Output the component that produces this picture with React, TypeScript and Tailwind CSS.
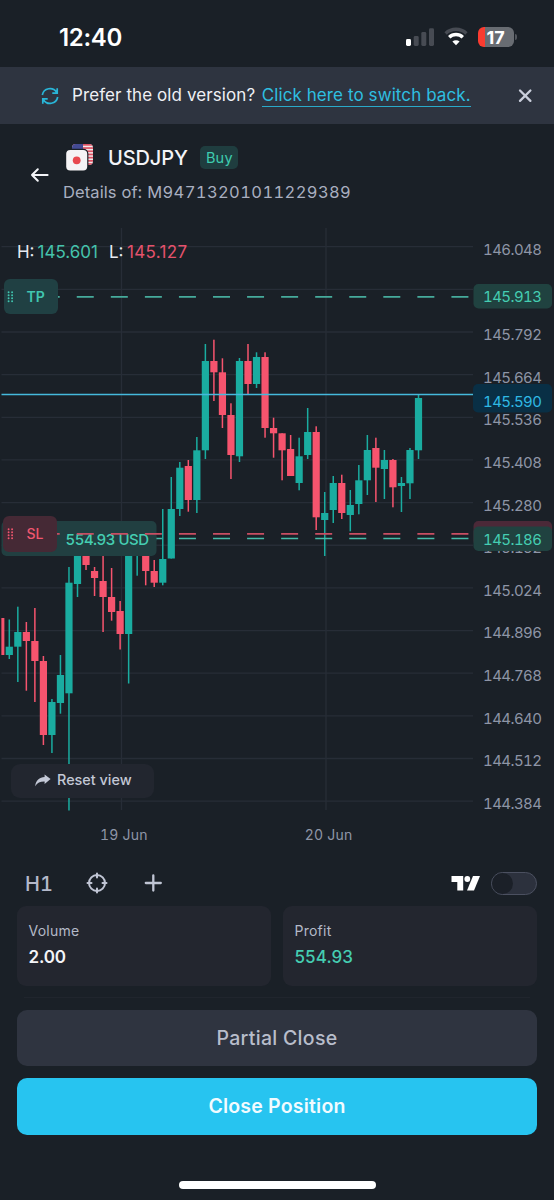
// ─── Chart data ───────────────────────────────────────────────────────────────

const FIRST_X = 9.3
const STEP = 8.525
const TOP = 228

// [isUp, high, open/close top, open/close bottom, low] in canvas units
type Candle = [number, number, number, number, number]

const candles: Candle[] = [
  [0, 618, 618, 655, 655],
  [1, 619.5, 646.7, 655, 659],
  [1, 606.7, 632, 646.7, 682],
  [0, 622, 632, 641, 690.7],
  [0, 608, 641, 661, 702],
  [0, 656, 661, 735, 745],
  [1, 699, 702, 735, 753],
  [1, 655, 675, 703, 713.7],
  [1, 567, 582.7, 693.3, 810.5],
  [1, 545, 550, 584, 597],
  [0, 545, 550, 565, 570],
  [0, 567, 571, 578, 596],
  [0, 550, 581, 597, 632],
  [0, 568, 597, 612, 620.7],
  [0, 601, 611, 634, 649.5],
  [1, 545, 550, 634, 683.5],
  [1, 545, 550, 555, 575.7],
  [0, 545, 550, 571, 585.3],
  [0, 560, 571, 582.7, 587],
  [1, 509, 559, 582.7, 585.3],
  [1, 477, 509, 558.5, 558.5],
  [1, 462, 467.7, 509, 516],
  [0, 460, 466, 500, 511.7],
  [1, 437, 450.3, 500, 513],
  [1, 344, 361, 450.3, 459],
  [0, 339.7, 361, 372.3, 401],
  [0, 358.3, 372.3, 415, 428],
  [0, 403.3, 415, 455, 479],
  [1, 358, 361, 456.3, 462],
  [0, 344, 361, 384, 394],
  [1, 352.3, 357, 384, 388],
  [0, 352.3, 357, 428, 437.7],
  [0, 417.7, 428, 433.3, 457.7],
  [0, 433.3, 433.3, 450.3, 480.3],
  [0, 435, 449, 476, 476],
  [1, 437.7, 456.3, 483, 490.3],
  [1, 408, 432, 455, 459],
  [0, 426.3, 432, 517.3, 530],
  [1, 492, 513, 520, 556],
  [1, 476, 483, 510, 523],
  [0, 474.7, 483, 513, 519],
  [1, 490, 505, 515, 531.3],
  [1, 465, 480.3, 504, 514.3],
  [1, 435, 450, 480.3, 495],
  [0, 437.7, 448, 467.7, 502],
  [1, 450, 460, 469, 499],
  [0, 459, 460, 487.3, 507.3],
  [1, 477, 483, 486, 512],
  [1, 448, 450, 483.3, 499],
  [1, 395, 398, 450.3, 459],
]

const prices = [
  '146.048', '', '145.792', '145.664', '145.536', '145.408', '145.280',
  '145.152', '145.024', '144.896', '144.768', '144.640', '144.512', '144.384',
]

// ─── Status bar ───────────────────────────────────────────────────────────────

function StatusBar() {
  return (
    <header className="flex h-[67px] items-center justify-between pt-[7px] pr-[37px] pl-[59px]">
      <span className="pt-px text-[24px] font-semibold tracking-[-0.3px] text-white">12:40</span>
      <div className="flex items-center">
        <svg width="30" height="20" viewBox="0 0 30 20">
          <rect x="1" y="12" width="5" height="7" rx="1.4" fill="#fff" />
          <rect x="8.7" y="9" width="5" height="10" rx="1.4" fill="#474b53" />
          <rect x="16.3" y="5" width="5" height="14" rx="1.4" fill="#474b53" />
          <rect x="24" y="1.3" width="5" height="17.7" rx="1.4" fill="#474b53" />
        </svg>
        <svg className="ml-[9px]" width="24" height="20" viewBox="0 0 24 20" fill="none">
          <path d="M1.6 6.4a15 15 0 0 1 20.8 0" stroke="#474b53" strokeWidth="3.4" />
          <path d="M5.2 10.3a9.8 9.8 0 0 1 13.6 0" stroke="#fff" strokeWidth="3.4" />
          <path d="M12 18.2 8.4 14.6a5.2 5.2 0 0 1 7.2 0Z" fill="#fff" />
        </svg>
        <div className="ml-[10px] flex h-[20px] w-[36px] items-center justify-center overflow-hidden rounded-[6px] bg-[linear-gradient(90deg,#fb3b30_19%,#686c72_19%)] pr-[1px] text-[18px] font-bold text-white">
          17
        </div>
        <div className="ml-[1px] h-[6px] w-[2px] rounded-r-full bg-[#52565d]" />
      </div>
    </header>
  )
}

// ─── Version banner ───────────────────────────────────────────────────────────

function Banner() {
  return (
    <div className="flex h-[57px] items-center bg-[#2e3440] pr-[20px] pl-[41px]">
      <svg width="18" height="18" viewBox="0 0 18 18" fill="none" stroke="#29b6d8" strokeWidth="1.7">
        <path d="M1.3 8A7.8 7.8 0 0 1 15.6 5.3M16.2 1.2v4.9h-4.9" />
        <path d="M16.7 10A7.8 7.8 0 0 1 2.4 12.7M1.8 16.8v-4.9h4.9" />
      </svg>
      <p className="ml-[13px] flex items-baseline text-[17px] leading-[22px] tracking-[0.09px] whitespace-pre text-[#eef0f5]">
        Prefer the old version?
        <a className="ml-[6.5px] border-b-[1.5px] border-[#2aa9c9] text-[#2ebfe0]">
          Click here to switch back.
        </a>
      </p>
      <svg className="ml-auto" width="18" height="18" viewBox="0 0 18 18" stroke="#c9cedb" strokeWidth="2.3" strokeLinecap="round">
        <path d="M4 3.5l10.4 10.4M14.4 3.5L4 13.9" />
      </svg>
    </div>
  )
}

// ─── Instrument header ────────────────────────────────────────────────────────

function PairFlags() {
  return (
    <svg width="28" height="28" viewBox="0 0 28 28">
      <defs>
        <clipPath id="us">
          <rect x="6" y="0" width="21" height="21" rx="4" />
        </clipPath>
      </defs>
      <g clipPath="url(#us)">
        <rect x="6" width="21" height="22" fill="#f3e7ea" />
        {[0, 3.2, 6.4, 9.6, 12.8, 16, 19.2].map((y) => (
          <rect key={y} x="6" y={y} width="21" height="1.7" fill="#dc5263" />
        ))}
        <rect x="6" width="11" height="10" fill="#434a93" />
      </g>
      <rect x="-0.8" y="4.8" width="23.2" height="23" rx="5" fill="#1a2027" />
      <rect x="0.2" y="6" width="21" height="20.6" rx="4" fill="#f5f3f5" />
      <circle cx="10.7" cy="16.3" r="3.9" fill="#e8484f" />
    </svg>
  )
}

function InstrumentHeader() {
  return (
    <section className="flex h-[104px] pl-[30px]">
      <svg className="mt-[42px]" width="20" height="18" viewBox="0 0 20 18" fill="none" stroke="#f3f4f8" strokeWidth="2" strokeLinecap="round" strokeLinejoin="round">
        <path d="M17.6 9H2M7.8 3.2 2 9l5.8 5.8" />
      </svg>
      <div className="ml-[13px] pt-[19px]">
        <div className="flex h-[29px] items-center pl-[3px]">
          <PairFlags />
          <h1 className="ml-[14px] text-[20px] font-medium tracking-[-0.1px] text-[#f3f4f8]">USDJPY</h1>
          <span className="ml-[12.5px] flex h-[23px] w-[38px] items-center justify-center rounded-[5px] bg-[#1f3d3f] text-[14.5px] tracking-[0.2px] text-[#3ecdb0]">
            Buy
          </span>
        </div>
        <p className="mt-[8px] text-[16.5px] leading-[24px] tracking-[0.1px] whitespace-nowrap text-[#a9afc0]">
          Details of: <span className="tracking-[0.4px] tabular-nums">M94713201011229389</span>
        </p>
      </div>
    </section>
  )
}

// ─── Chart ────────────────────────────────────────────────────────────────────

function Candles() {
  return (
    <g clipPath="url(#plot)">
      {candles.map(([up, high, top, bottom, low], i) => {
        const x = FIRST_X + STEP * (i - 1)
        const fill = up ? '#1aaca0' : '#f6546e'
        return (
          <g key={i} fill={fill}>
            <rect x={x - 0.75} y={high} width="1.5" height={low - high} />
            <rect x={x - 3.6} y={top} width="7.2" height={bottom - top} />
          </g>
        )
      })}
    </g>
  )
}

type DashProps = {
  y: number
  color: string
  height: number
  from?: number
}

function DashLine({ y, color, height, from = 42.7 }: DashProps) {
  return (
    <line x1={from} x2="473" y1={y} y2={y} stroke={color} strokeWidth={height} strokeDasharray="17 17.06" />
  )
}

function Grip({ color }: { color: string }) {
  return (
    <svg width="7" height="12" viewBox="0 0 7 12" fill={color}>
      {[1.2, 4.2, 7.2, 10.2].map((y) => (
        <g key={y}>
          <circle cx="1.6" cy={y} r="0.95" />
          <circle cx="5.1" cy={y} r="0.95" />
        </g>
      ))}
    </svg>
  )
}

function Chart() {
  return (
    <section className="relative h-[628px]">
      <svg width="554" height="628" viewBox={`0 ${TOP} 554 628`} className="block tabular-nums">
        <defs>
          <clipPath id="plot">
            <rect x="1.5" y={TOP} width="472" height="583" />
          </clipPath>
        </defs>
        <g stroke="#272d37" strokeWidth="1.3">
          {prices.map((_, i) => (
            <line key={i} x1="1.5" x2="473" y1={246.7 + 42.65 * i} y2={246.7 + 42.65 * i} />
          ))}
          <line x1="121.5" x2="121.5" y1="228" y2="810" />
          <line x1="326" x2="326" y1="228" y2="810" />
        </g>
        <Candles />
        <line x1="1.5" x2="473" y1="394.4" y2="394.4" stroke="#45b9dc" strokeWidth="1.5" />
        <DashLine y={296.9} color="#46ab9c" height={1.9} />

        {/* open position pill with both order lines running over it */}
        <rect x="1.5" y="521" width="155" height="35" rx="5" fill="#213f41" />
        <DashLine y={538.4} color="#46bba9" height={1.5} from={144.9} />
        <rect x="144" y="536" width="12.5" height="5" fill="#213f41" />
        <text x="65.5" y="544.5" fontSize="15" fontWeight="500" fill="#45ceb2" textLength="83.5">554.93 USD</text>
        <DashLine y={533.8} color="#c94e63" height={1.7} />

        <g fontSize="15" fill="#8e95a6">
          {prices.map((price, i) => (
            <text key={i} x="483" y={254.6 + 42.65 * i} textLength={price ? 59 : undefined}>{price}</text>
          ))}
          <text x="100" y="840" fontSize="14" textLength="47.5">19 Jun</text>
          <text x="304.8" y="840" fontSize="14" textLength="47.5">20 Jun</text>
        </g>

        <rect x="473.5" y="284" width="78.5" height="24.5" rx="5" fill="#204240" />
        <rect x="473" y="384" width="79" height="28.5" rx="5" fill="#092f45" />
        <rect x="473.5" y="521" width="78.5" height="25" rx="5" fill="#4b2938" />
        <rect x="473.5" y="526.5" width="78.5" height="24.5" rx="5" fill="#204240" />
        <g fontSize="15">
          <text x="483" y="301.9" fill="#45ceb2" textLength="59">145.913</text>
          <text x="483" y="406.8" fill="#2fb9e4" textLength="59">145.590</text>
          <text x="483" y="544.6" fill="#45ceb2" textLength="59">145.186</text>
        </g>

        <g fontSize="17" className="[font-variant-numeric:normal]">
          <text x="17" y="257.5" fill="#e8ebf2" textLength="17.5">H:</text>
          <text x="37.5" y="257.5" fill="#45c3ac" textLength="60.5">145.601</text>
          <text x="109" y="257.5" fill="#e8ebf2">L:</text>
          <text x="127" y="257.5" fill="#e4526c" textLength="60">145.127</text>
        </g>
      </svg>

      <div className="absolute top-[51px] left-[4px] flex h-[35px] w-[54px] items-center rounded-[6px] bg-[#204043] pl-[3px] text-[14px] font-semibold text-[#41c6b0]">
        <Grip color="#41c6b0" />
        <span className="ml-[12.5px]">TP</span>
      </div>
      <div className="absolute top-[287.5px] left-[3px] flex h-[36px] w-[54px] items-center rounded-[6px] bg-[#452935] pl-[4px] text-[14px] font-medium text-[#f0566f]">
        <Grip color="#f0566f" />
        <span className="ml-[12.5px]">SL</span>
      </div>
      <button className="absolute top-[536px] left-[11px] flex h-[34px] w-[143px] items-center rounded-[9px] bg-[#22262f] pb-[2px] pl-[24px] text-[14.4px] font-medium text-[#c3c8d6]">
        <svg width="16" height="13" viewBox="0 0 16 13" fill="#c3c8d6">
          <path d="M15.6 5.1 9.6 0.4v2.7C4.5 3.3.8 6.3.2 12.3c2.2-3.6 5-4.9 9.4-4.8v2.6z" />
        </svg>
        <span className="ml-[6px]">Reset view</span>
      </button>
    </section>
  )
}

// ─── Toolbar ──────────────────────────────────────────────────────────────────

function Toolbar() {
  return (
    <section className="flex h-[50px] items-center pt-[4px] pr-[17px] pl-[25px]">
      <span className="w-[28px] pt-px text-[20px] font-medium whitespace-nowrap tabular-nums text-[#b4b9ca]">H1</span>
      <svg className="ml-[32.5px]" width="22" height="22" viewBox="0 0 22 22" fill="none" stroke="#c0c5d4" strokeWidth="2" strokeLinecap="round">
        <circle cx="11" cy="11" r="8" />
        <path d="M11 1.5v4M11 16.5v4M1.5 11h4M16.5 11h4" />
      </svg>
      <svg className="ml-[36px]" width="18" height="18" viewBox="0 0 18 18" stroke="#c0c5d4" strokeWidth="2.3" strokeLinecap="round">
        <path d="M9.3 1.5v15M1.8 9h15" />
      </svg>
      <svg className="ml-auto" width="29" height="15" viewBox="0 0 29 15" fill="#fff">
        <path d="M0.5 0h11.7v14.5H6.3V6H0.5z" />
        <circle cx="16.3" cy="3" r="2.9" />
        <path d="M22 0h7L23 14.5h-7z" />
      </svg>
      <button className="ml-[11px] flex h-[23px] w-[46px] items-center rounded-full border border-[#4b5060] bg-[#2c313d]">
        <span className="h-[21px] w-[21px] rounded-full bg-[#1b2028]" />
      </button>
    </section>
  )
}

// ─── Stats and actions ────────────────────────────────────────────────────────

type StatProps = {
  label: string
  value: string
  valueClass: string
}

function Stat({ label, value, valueClass }: StatProps) {
  return (
    <div className="h-[80px] flex-1 rounded-[9px] bg-[#23262f] px-[11.5px] pt-[14px]">
      <p className="text-[14px] leading-[22px] tracking-[0.25px] text-[#b4b9c8]">{label}</p>
      <p className={`mt-[4px] text-[17px] leading-[22px] ${valueClass}`}>{value}</p>
    </div>
  )
}

export default function App() {
  return (
    <main className="flex h-[1200px] w-[554px] flex-col overflow-hidden bg-[#1a2027] font-['Inter',sans-serif]">
      <StatusBar />
      <Banner />
      <InstrumentHeader />
      <Chart />
      <Toolbar />
      <section className="flex gap-[12px] px-[17px]">
        <Stat label="Volume" value="2.00" valueClass="font-semibold text-[#f3f4f8] tracking-[-0.2px]" />
        <Stat label="Profit" value="554.93" valueClass="font-medium text-[#45ceb2] tracking-[0.1px]" />
      </section>
      <div className="mx-[24px] mt-[11px] h-px bg-[#20252d]" />
      <section className="mt-[11.5px] flex flex-col gap-[12px] px-[17px] text-[19.5px]">
        <button className="h-[56.5px] rounded-[10px] bg-[#2f3440] pt-[1px] font-medium tracking-[0.3px] text-[#b8bdcb]">
          Partial Close
        </button>
        <button className="h-[57px] rounded-[10px] bg-[#27c4f0] font-semibold tracking-[0.2px] text-[#f2fbff]">
          Close Position
        </button>
      </section>
      <div className="mt-[46px] ml-[179px] h-[8px] w-[197px] shrink-0 rounded-full bg-white" />
    </main>
  )
}
